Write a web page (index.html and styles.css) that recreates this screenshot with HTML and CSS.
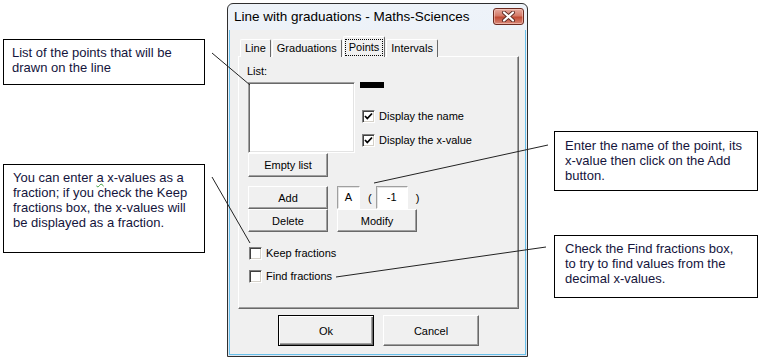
FILE: index.html
```html
<!DOCTYPE html>
<html lang="en">
<head>
  <meta charset="UTF-8" />
  <title>Line with graduations - Points</title>
  <link rel="stylesheet" href="styles.css">
</head>
<body>
  <div class="page">
    <!-- Bulles d'explication -->
    <div class="note note-list">List of the points that will be drawn on the line</div>
    <div class="note note-fraction">You can enter <span class="spell">a</span> x-values as a fraction; if you check the Keep fractions box, the x-values will be displayed as a fraction.</div>
    <div class="note note-add">Enter the name of the point, its x-value then click on the Add button.</div>
    <div class="note note-find">Check the Find fractions box, to try to find values from the decimal x-values.</div>

    <!-- Fenêtre de dialogue -->
    <div class="window">
      <div class="titlebar">
        <span class="title">Line with graduations - Maths-Sciences</span>
        <span class="close">
          <svg width="15" height="11" viewBox="0 0 15 11">
            <path d="M3 1.5 L12 9.5 M12 1.5 L3 9.5" stroke="#5a2a24" stroke-width="4" stroke-linecap="round"/>
            <path d="M3 1.5 L12 9.5 M12 1.5 L3 9.5" stroke="#fff" stroke-width="2.2" stroke-linecap="round"/>
          </svg>
        </span>
      </div>

      <div class="client">
        <div class="tabs">
          <span class="tab">Line</span>
          <span class="tab">Graduations</span>
          <span class="tab tab-active"><span class="focus">Points</span></span>
          <span class="tab">Intervals</span>
        </div>

        <div class="panel">
          <div class="label">List:</div>
          <div class="list-row">
            <div class="listbox"></div>
            <div class="list-side">
              <div class="swatch"></div>
              <label class="check check-first"><span class="box"><svg width="11" height="11" viewBox="0 0 11 11"><path d="M2 5 L4.3 7.5 L9 2.5" fill="none" stroke="#000" stroke-width="1.8"/></svg></span>Display the name</label>
              <label class="check check-next"><span class="box"><svg width="11" height="11" viewBox="0 0 11 11"><path d="M2 5 L4.3 7.5 L9 2.5" fill="none" stroke="#000" stroke-width="1.8"/></svg></span>Display the x-value</label>
            </div>
          </div>
          <button class="btn btn-tall">Empty list</button>

          <div class="edit-grid">
            <button class="btn">Add</button>
            <div class="fields">
              <span class="field field-name">A</span>
              <span class="paren">(</span>
              <span class="field field-x">-1</span>
              <span class="paren paren-close">)</span>
            </div>
            <button class="btn">Delete</button>
            <button class="btn">Modify</button>
          </div>

          <div class="options">
            <label class="check"><span class="box"></span>Keep fractions</label>
            <label class="check"><span class="box"></span>Find fractions</label>
          </div>
        </div>

        <div class="actions">
          <button class="btn btn-big btn-default">Ok</button>
          <button class="btn btn-big">Cancel</button>
        </div>
      </div>
    </div>

    <!-- Traits de rappel -->
    <svg class="leaders" width="764" height="360" viewBox="0 0 764 360">
      <line x1="212" y1="53" x2="250" y2="85" />
      <line x1="212" y1="177" x2="250" y2="243" />
      <line x1="548" y1="145" x2="374" y2="183" />
      <line x1="546" y1="247" x2="336" y2="277" />
    </svg>
  </div>
</body>
</html>
```

FILE: styles.css
```css
/* Page de capture */
body {
  margin: 0;
  font-family: "Liberation Sans", Arial, sans-serif;
  background: #fff;
}

.page {
  position: relative;
  width: 764px;
  height: 360px;
  overflow: hidden;
}

/* Bulles d'explication */
.note {
  position: absolute;
  box-sizing: border-box;
  width: 202px;
  border: 1px solid #000;
  background: #fff;
  color: #14143c;
  font-size: 13px;
  line-height: 15px;
}

.note-list {
  left: 3px;
  top: 39px;
  height: 46px;
  padding: 5px 6px 0 8px;
}

.note-fraction {
  left: 3px;
  top: 164px;
  height: 89px;
  padding: 5px 6px 0 9px;
}

.note-add {
  left: 554px;
  top: 131px;
  width: 204px;
  height: 60px;
  padding: 6px 12px 0 10px;
}

.note-find {
  left: 554px;
  top: 235px;
  width: 204px;
  height: 63px;
  padding: 5px 12px 0 10px;
}

.spell {
  text-decoration: underline wavy #3a9a3a;
  text-decoration-thickness: 1px;
  text-underline-offset: 1px;
}

.leaders {
  position: absolute;
  left: 0;
  top: 0;
  pointer-events: none;
}

.leaders line {
  stroke: #222;
  stroke-width: 1;
}

/* Fenêtre */
.window {
  position: absolute;
  left: 227px;
  top: 3px;
  width: 301px;
  height: 354px;
  box-sizing: border-box;
  border: 1px solid #2f2f2f;
  border-radius: 6px 6px 0 0;
  background: linear-gradient(#eef3f9, #dde7f2);
  padding: 0 1px 1px;
  display: flex;
  flex-direction: column;
}

.titlebar {
  height: 26px;
  flex-shrink: 0;
  display: flex;
  justify-content: space-between;
  align-items: flex-start;
  padding: 0 2px 0 5px;
}

.title {
  font-size: 13.5px;
  line-height: 26px;
  color: #000;
}

.close {
  margin-top: 4px;
  width: 31px;
  height: 17px;
  box-sizing: border-box;
  border: 1px solid #6b2a20;
  border-radius: 3px;
  background: linear-gradient(#e6aa9f, #d47a68 45%, #c04a33 55%, #d8897a);
  box-shadow: inset 0 0 0 1px rgba(255, 220, 210, 0.5);
  display: flex;
  align-items: center;
  justify-content: center;
}

.client {
  flex: 1;
  background: #f0f0f0;
  border: 1px solid #68c0ea;
  border-top: none;
  padding: 6px 6px 0 8px;
}

/* Onglets */
.tabs {
  display: flex;
  align-items: flex-end;
  height: 21px;
  margin-left: 2px;
  position: relative;
  z-index: 1;
}

.tab {
  height: 18px;
  box-sizing: border-box;
  padding: 0 4px;
  margin-right: 1px;
  font-size: 11px;
  line-height: 17px;
  border: 1px solid;
  border-color: #fff #696969 transparent #fff;
  border-bottom: none;
  border-radius: 2px 2px 0 0;
  background: #f0f0f0;
}

.tab-active {
  height: 21px;
  padding: 2px 1px 0;
  line-height: 14px;
}

.focus {
  display: block;
  padding: 0 3px;
  border: 1px dotted #000;
  height: 15px;
}

.panel {
  width: 281px;
  height: 253px;
  box-sizing: border-box;
  margin-top: -1px;
  border: 1px solid;
  border-color: #fff #696969 #696969 #fff;
  box-shadow: inset -1px -1px #a0a0a0;
  padding: 8px 9px;
  font-size: 11px;
}

.label {
  line-height: 13px;
  margin-left: -1px;
}

.list-row {
  display: flex;
  gap: 5px;
  margin-top: 4px;
}

.listbox {
  width: 107px;
  height: 71px;
  box-sizing: border-box;
  background: #fff;
  border: 1px solid;
  border-color: #a0a0a0 #fff #fff #a0a0a0;
  box-shadow: inset 1px 1px #696969, inset -1px -1px #e3e3e3;
}

.list-side {
  display: flex;
  flex-direction: column;
}

.swatch {
  width: 24px;
  height: 6px;
  background: #000;
}

/* Cases à cocher */
.check {
  display: flex;
  align-items: center;
  gap: 4px;
  height: 13px;
  line-height: 13px;
  font-size: 11px;
}

.check-first {
  margin: 22px 0 0 2px;
}

.check-next {
  margin: 11px 0 0 2px;
}

.box {
  width: 13px;
  height: 13px;
  box-sizing: border-box;
  background: #fff;
  border: 1px solid;
  border-color: #808080 #fff #fff #808080;
  box-shadow: inset 1px 1px #404040, inset -1px -1px #d4d0c8;
  display: flex;
  align-items: center;
  justify-content: center;
}

.box svg {
  display: block;
}

/* Boutons */
.btn {
  display: block;
  width: 80px;
  height: 23px;
  box-sizing: border-box;
  padding: 0;
  font-family: "Liberation Sans", Arial, sans-serif;
  font-size: 11px;
  color: #000;
  background: #f0f0f0;
  border: 1px solid;
  border-color: #fff #696969 #696969 #fff;
  box-shadow: inset -1px -1px #a0a0a0;
}

.btn-tall {
  height: 24px;
}

.btn-big {
  width: 96px;
  height: 31px;
}

.btn-default {
  border: 1px solid #000;
  box-shadow: inset 1px 1px #fff, inset -1px -1px #696969, inset -2px -2px #a0a0a0;
}

.edit-grid {
  display: grid;
  grid-template-columns: 80px auto;
  grid-auto-rows: 23px;
  column-gap: 9px;
  justify-content: start;
  margin-top: 9px;
}

.fields {
  display: flex;
  align-items: center;
}

.field {
  height: 23px;
  box-sizing: border-box;
  background: #fff;
  border: 1px solid;
  border-color: #a0a0a0 #fff #fff #a0a0a0;
  box-shadow: inset 1px 1px #e3e3e3;
  text-align: center;
  line-height: 21px;
}

.field-name {
  width: 23px;
}

.field-x {
  width: 32px;
}

.paren {
  margin: 0 4px 0 8px;
}

.paren-close {
  margin: 0 0 0 8px;
}

.options {
  display: flex;
  flex-direction: column;
  gap: 10px;
  margin-top: 15px;
  padding-left: 1px;
}

.actions {
  display: flex;
  justify-content: center;
  gap: 9px;
  margin-top: 6px;
}
```
